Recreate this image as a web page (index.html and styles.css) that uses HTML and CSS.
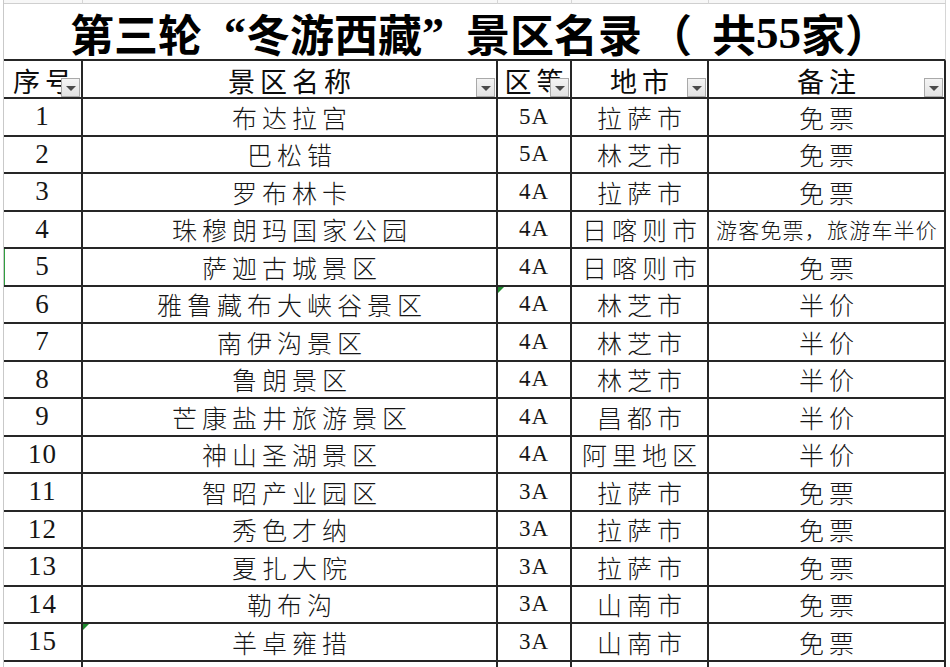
FILE: index.html
```html
<!DOCTYPE html>
<html lang="zh-CN">
<head>
<meta charset="utf-8">
<title>第三轮“冬游西藏”景区名录</title>
<link rel="stylesheet" href="styles.css">
</head>
<body>
<div class="sheet">
  <div class="row strip">
    <div class="c"></div><div class="c"></div><div class="c"></div><div class="c"></div><div class="c"></div>
  </div>
  <div class="title">第三轮<span class="q ql">“</span>冬游西藏<span class="q qr">”</span>景区名录<span class="p">（</span>共<span class="num">55</span>家）</div>
  <div class="row head">
    <div class="c"><span class="t">序号</span><span class="dd"></span></div>
    <div class="c"><span class="t">景区名称</span><span class="dd"></span></div>
    <div class="c"><span class="t">区等</span><span class="dd"></span></div>
    <div class="c"><span class="t">地市</span><span class="dd"></span></div>
    <div class="c"><span class="t">备注</span><span class="dd"></span></div>
  </div>
  <div class="row"><div class="c n">1</div><div class="c z"><span>布达拉宫</span></div><div class="c a">5A</div><div class="c z"><span>拉萨市</span></div><div class="c z"><span>免票</span></div></div>
  <div class="row"><div class="c n">2</div><div class="c z"><span>巴松错</span></div><div class="c a">5A</div><div class="c z"><span>林芝市</span></div><div class="c z"><span>免票</span></div></div>
  <div class="row"><div class="c n">3</div><div class="c z"><span>罗布林卡</span></div><div class="c a">4A</div><div class="c z"><span>拉萨市</span></div><div class="c z"><span>免票</span></div></div>
  <div class="row"><div class="c n">4</div><div class="c z"><span>珠穆朗玛国家公园</span></div><div class="c a">4A</div><div class="c z"><span>日喀则市</span></div><div class="c z small"><span>游客免票，旅游车半价</span></div></div>
  <div class="row"><div class="c n mark-left">5</div><div class="c z"><span>萨迦古城景区</span></div><div class="c a">4A</div><div class="c z"><span>日喀则市</span></div><div class="c z"><span>免票</span></div></div>
  <div class="row"><div class="c n">6</div><div class="c z"><span>雅鲁藏布大峡谷景区</span></div><div class="c a tri">4A</div><div class="c z"><span>林芝市</span></div><div class="c z"><span>半价</span></div></div>
  <div class="row"><div class="c n">7</div><div class="c z"><span>南伊沟景区</span></div><div class="c a">4A</div><div class="c z"><span>林芝市</span></div><div class="c z"><span>半价</span></div></div>
  <div class="row"><div class="c n">8</div><div class="c z"><span>鲁朗景区</span></div><div class="c a">4A</div><div class="c z"><span>林芝市</span></div><div class="c z"><span>半价</span></div></div>
  <div class="row"><div class="c n">9</div><div class="c z"><span>芒康盐井旅游景区</span></div><div class="c a">4A</div><div class="c z"><span>昌都市</span></div><div class="c z"><span>半价</span></div></div>
  <div class="row"><div class="c n">10</div><div class="c z"><span>神山圣湖景区</span></div><div class="c a">4A</div><div class="c z"><span>阿里地区</span></div><div class="c z"><span>半价</span></div></div>
  <div class="row"><div class="c n">11</div><div class="c z"><span>智昭产业园区</span></div><div class="c a">3A</div><div class="c z"><span>拉萨市</span></div><div class="c z"><span>免票</span></div></div>
  <div class="row"><div class="c n">12</div><div class="c z"><span>秀色才纳</span></div><div class="c a">3A</div><div class="c z"><span>拉萨市</span></div><div class="c z"><span>免票</span></div></div>
  <div class="row"><div class="c n">13</div><div class="c z"><span>夏扎大院</span></div><div class="c a">3A</div><div class="c z"><span>拉萨市</span></div><div class="c z"><span>免票</span></div></div>
  <div class="row"><div class="c n">14</div><div class="c z"><span>勒布沟</span></div><div class="c a">3A</div><div class="c z"><span>山南市</span></div><div class="c z"><span>免票</span></div></div>
  <div class="row"><div class="c n">15</div><div class="c z tri"><span>羊卓雍措</span></div><div class="c a">3A</div><div class="c z"><span>山南市</span></div><div class="c z"><span>免票</span></div></div>
  <div class="row"><div class="c n"></div><div class="c z"></div><div class="c a"></div><div class="c z"></div><div class="c z"></div></div>
</div>
</body>
</html>
```

FILE: styles.css
```css
html, body {
  margin: 0;
  padding: 0;
  background: #ffffff;
  overflow: hidden;
}
body {
  width: 950px;
  height: 667px;
  font-family: "Liberation Serif", "Noto Sans CJK SC", serif;
  color: #161616;
}
.sheet {
  margin-left: 3px;
  width: 943px;
  border-left: 1px solid #c9c9c9;
}
.row {
  display: grid;
  grid-template-columns: 79px 415px 74px 137px 237px;
  height: 37.5px;
}
.c {
  position: relative;
  box-sizing: border-box;
  border-right: 2px solid #262626;
  border-bottom: 2px solid #262626;
  display: flex;
  align-items: center;
  justify-content: center;
  white-space: nowrap;
  overflow: hidden;
}
.strip {
  height: 4px;
}
.strip .c {
  border-right: 1px solid #d6d6d6;
  border-bottom: 1px solid #cfcfcf;
  background: #f7f7f7;
}
.title {
  box-sizing: border-box;
  height: 57px;
  width: 942px;
  border-right: 1px solid #d6d6d6;
  border-bottom: 2px solid #262626;
  display: flex;
  align-items: center;
  justify-content: center;
  padding-left: 10px;
  padding-top: 3px;
  font-family: "Noto Sans CJK SC", sans-serif;
  font-weight: 700;
  font-size: 44px;
  color: #000;
  white-space: nowrap;
}
.title .num {
  font-family: "Liberation Serif", serif;
  font-weight: 700;
  font-size: 45px;
}
.title .q {
  display: inline-block;
  width: 44px;
  font-family: "Liberation Serif", serif;
}
.title .ql {
  text-align: right;
}
.title .qr {
  text-align: left;
}
.title .p {
  display: inline-block;
  width: 70px;
  box-sizing: border-box;
  padding-left: 6px;
  text-align: left;
}
.head {
  height: 38px;
}
.head .t {
  font-size: 27px;
  letter-spacing: 5px;
  margin-right: -5px;
  color: #0c0c0c;
  padding-top: 2px;
}
.dd {
  position: absolute;
  right: 1px;
  bottom: 0;
  width: 19px;
  height: 19px;
  box-sizing: border-box;
  border: 1px solid #a9a9a9;
  background: linear-gradient(#f4f4f4, #e2e2e2);
}
.dd::after {
  content: "";
  position: absolute;
  left: 4px;
  top: 7px;
  border-left: 5px solid transparent;
  border-right: 5px solid transparent;
  border-top: 5px solid #4a4a4a;
}
.n {
  font-size: 27px;
  letter-spacing: 1px;
}
.a {
  font-size: 23px;
  letter-spacing: 1px;
}
.z span {
  font-size: 25px;
  letter-spacing: 5px;
  margin-right: -5px;
  font-weight: 300;
}
.z.small span {
  font-size: 21px;
  letter-spacing: 1.2px;
  margin-right: -1px;
}
.mark-left::before {
  content: "";
  position: absolute;
  left: -1px;
  top: 0;
  bottom: 0;
  width: 2px;
  background: #2f9e3f;
}
.tri::before {
  content: "";
  position: absolute;
  left: 0;
  top: 0;
  border-top: 6px solid #1f8a2e;
  border-right: 6px solid transparent;
}
```
